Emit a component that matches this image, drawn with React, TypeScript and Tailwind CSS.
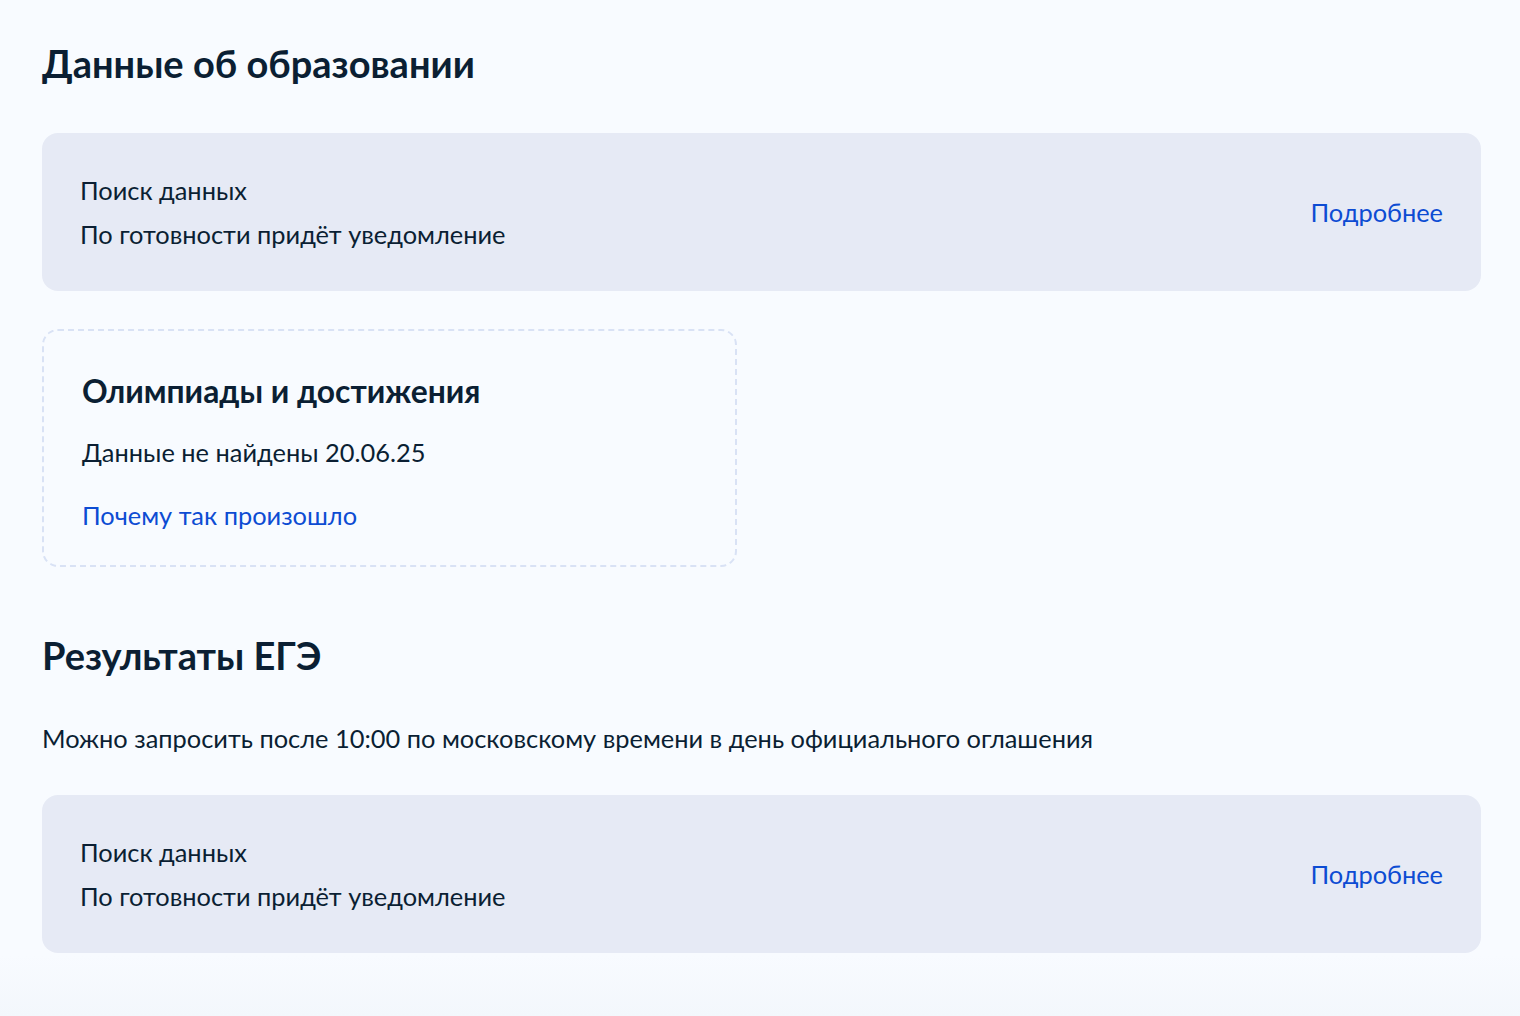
import React from "react";

function StatusCard() {
  return (
    <div className="flex items-center justify-between rounded-[16px] bg-[#e6eaf5] pl-[38px] pr-[38px] py-[35px]">
      <div className="flex flex-col text-[25.4px] leading-[44px] text-[#0b1f33]">
        <span>Поиск данных</span>
        <span>По готовности придёт уведомление</span>
      </div>
      <a className="text-[25.4px] leading-[36px] text-[#0d4cd3] cursor-pointer">Подробнее</a>
    </div>
  );
}

export default function App() {
  return (
    <div
      className="min-h-[1016px] w-full bg-[linear-gradient(to_bottom,#f8fbff_94%,#f3f7fc_100%)] px-[42px] pt-[39px] pb-[63px] text-[#0b1f33]"
      style={{ fontFamily: "Lato, 'Noto Sans', sans-serif" }}
    >
      <h1 className="text-[38px] font-bold leading-[48px]">Данные об образовании</h1>
      <div className="mt-[46px] w-[1439px]">
        <StatusCard />
      </div>
      <div className="mt-[38px] w-[695px] rounded-[16px] border-2 border-dashed border-[#d9e2f5] px-[38px] pt-[38px] pb-[32px]">
        <h2 className="text-[31.8px] font-bold leading-[44px]">Олимпиады и достижения</h2>
        <p className="mt-[21px] text-[25.4px] leading-[36px]">Данные не найдены 20.06.25</p>
        <a className="mt-[27px] block text-[25.4px] leading-[36px] text-[#0d4cd3] cursor-pointer">
          Почему так произошло
        </a>
      </div>
      <h1 className="mt-[64px] text-[38px] font-bold leading-[48px]">Результаты ЕГЭ</h1>
      <p className="mt-[41px] text-[25.4px] leading-[36px]">
        Можно запросить после 10:00 по московскому времени в день официального оглашения
      </p>
      <div className="mt-[39px] w-[1439px]">
        <StatusCard />
      </div>
    </div>
  );
}
